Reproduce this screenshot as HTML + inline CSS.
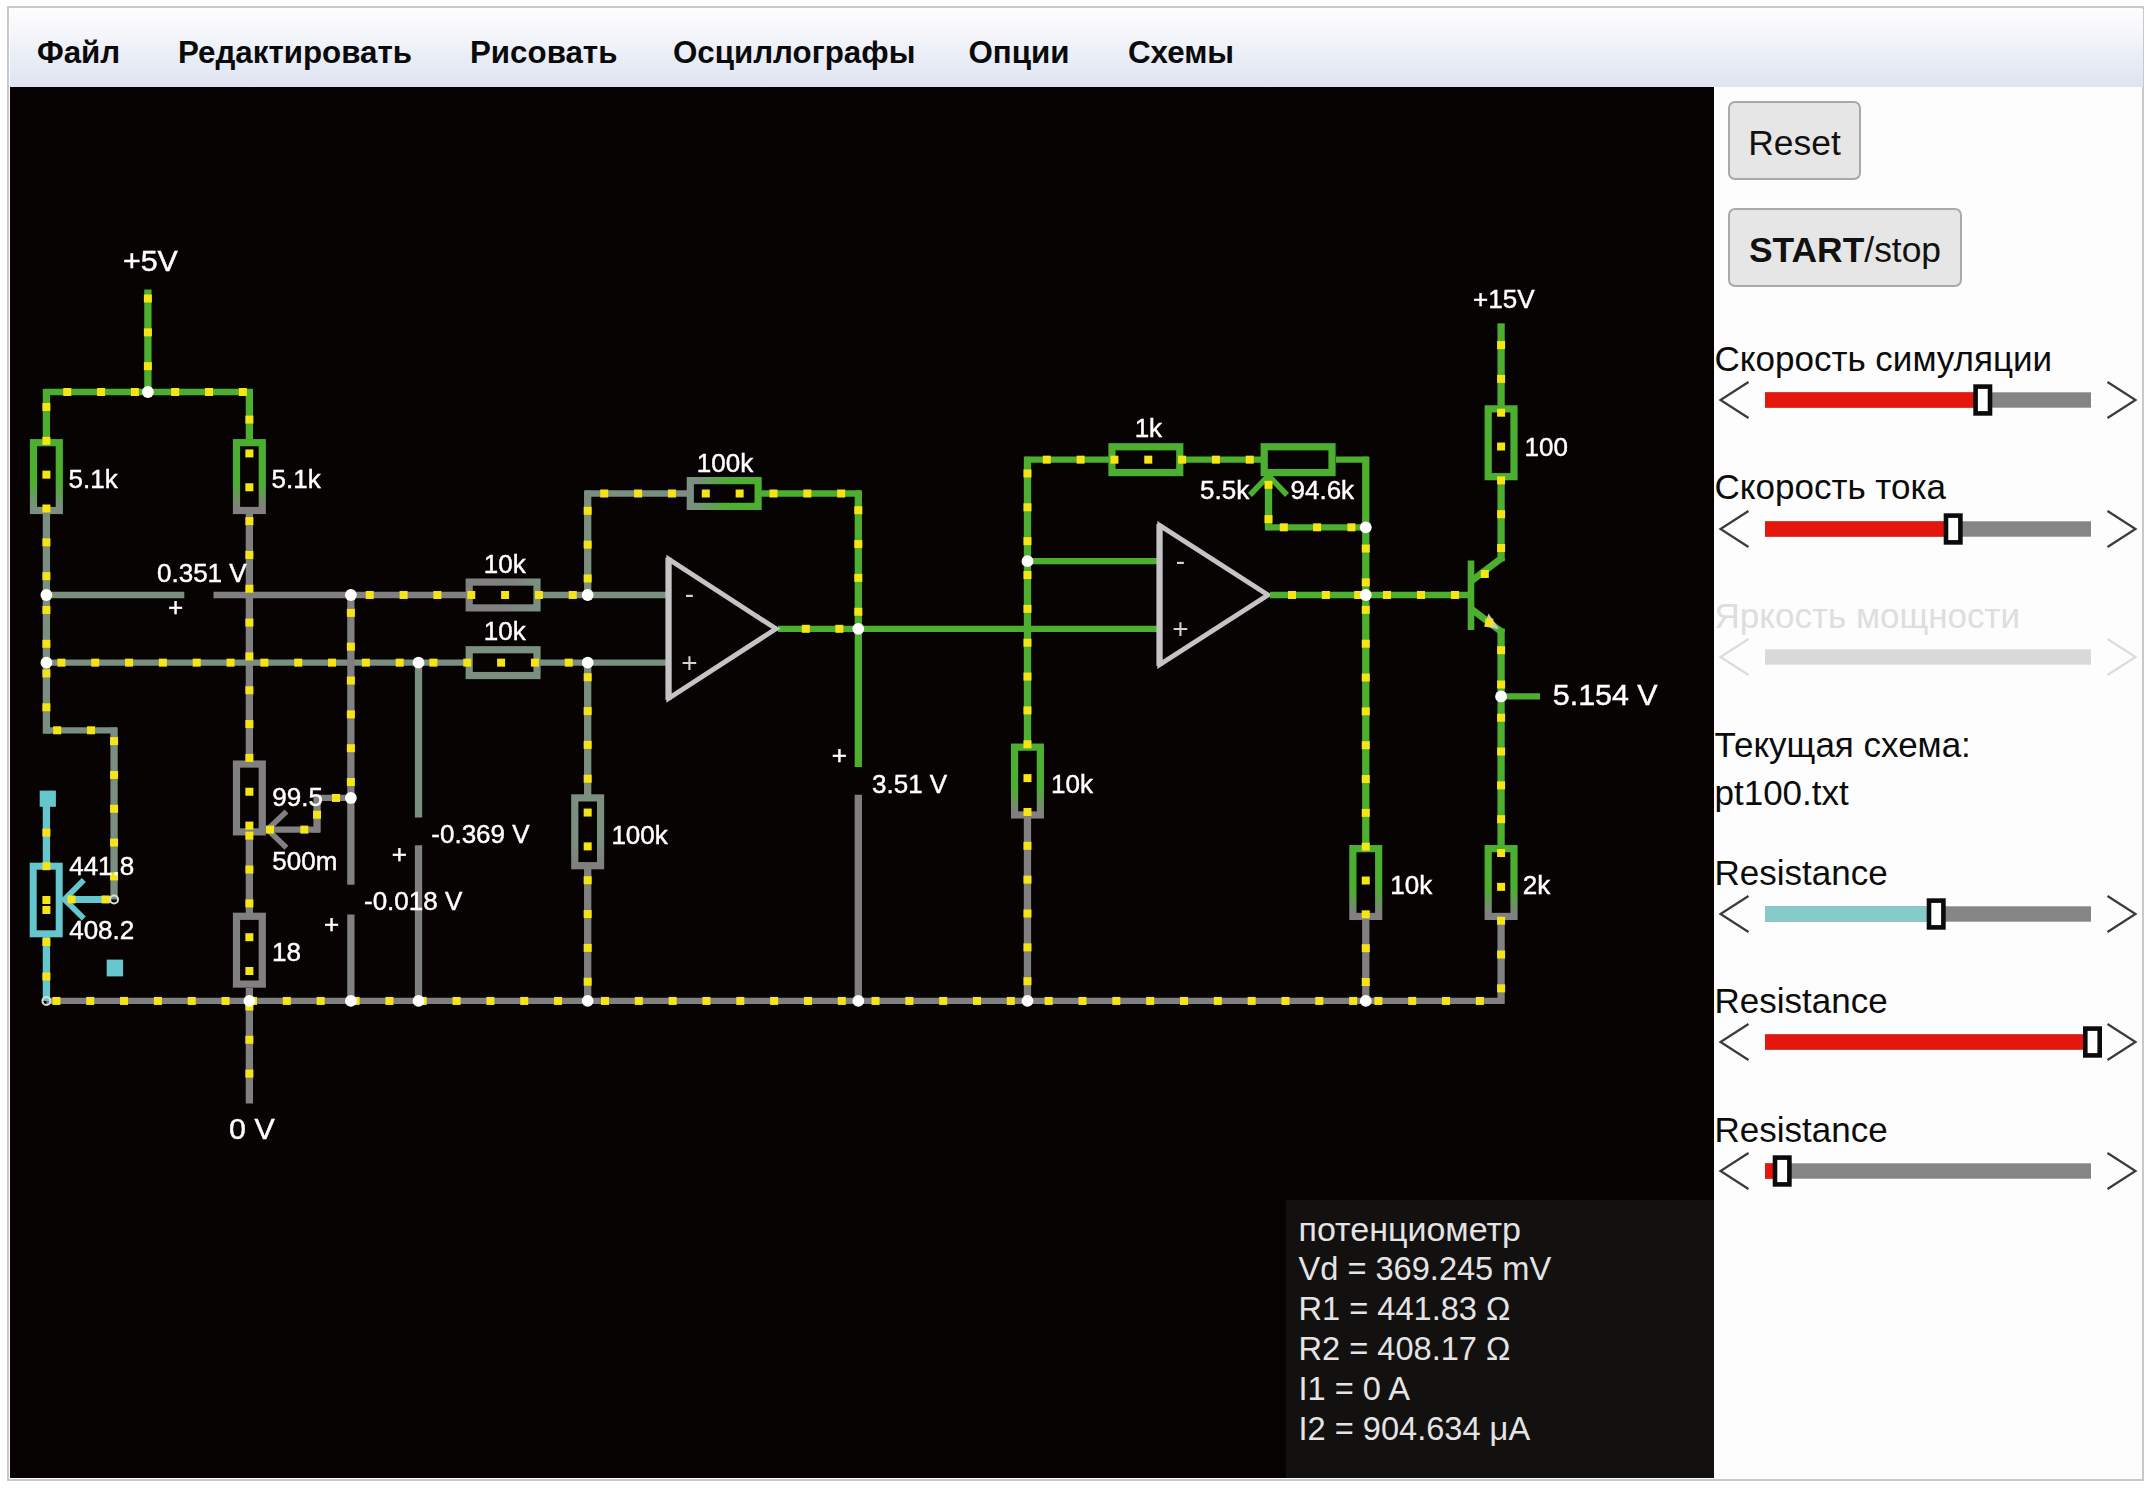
<!DOCTYPE html>
<html lang="ru"><head><meta charset="utf-8"><title>Circuit Simulator</title>
<style>
html,body{margin:0;padding:0;background:#fff;}
body{width:2154px;height:1489px;position:relative;overflow:hidden;font-family:"Liberation Sans",sans-serif;}
#frame{position:absolute;left:7px;top:6px;width:2133px;height:1471px;border:2.5px solid #c9c9c9;background:#fdfdfd;}
#menubar{position:absolute;left:9.5px;top:8.5px;width:2133px;height:78.5px;background:linear-gradient(#fdfdfe 0%,#f6f7fb 28%,#e9edf6 62%,#e0e4f0 100%);}
#menubar span{position:absolute;top:0;line-height:88px;font-weight:bold;font-size:31.3px;color:#0a0a0a;white-space:nowrap;}
#canvas{position:absolute;left:9.7px;top:87px;width:1704.3px;height:1391px;background:#070303;}
#cv{position:absolute;left:0;top:0;filter:blur(0.5px);}
#cv text{font-family:"Liberation Sans",sans-serif;}
#info{position:absolute;left:1286px;top:1200px;width:428px;height:278px;background:#131010;}
#info div{position:absolute;left:12.5px;font-size:32.6px;color:#e4e4e4;white-space:nowrap;line-height:40px;}
.btn{position:absolute;box-sizing:border-box;border:2px solid #a9a9a9;border-radius:7px;background:#e6e6e6;font-size:35.4px;color:#111;text-align:center;white-space:nowrap;}
.lbl{position:absolute;left:1714.5px;font-size:35px;color:#0c0c0c;white-space:nowrap;line-height:40px;}
.dis{color:#dedede;}
#side{position:absolute;left:0;top:0;}
</style></head><body>
<div id="frame"></div>
<div id="menubar">
<span style="left:27.5px">Файл</span><span style="left:168.5px">Редактировать</span><span style="left:460.5px">Рисовать</span><span style="left:663.5px">Осциллографы</span><span style="left:959px">Опции</span><span style="left:1118.5px">Схемы</span>
</div>
<div id="canvas"></div>
<div id="info">
<div style="top:9px;font-size:34px">потенциометр</div>
<div style="top:49px">Vd = 369.245 mV</div>
<div style="top:89px">R1 = 441.83 Ω</div>
<div style="top:129px">R2 = 408.17 Ω</div>
<div style="top:169px">I1 = 0 A</div>
<div style="top:209px">I2 = 904.634 μA</div>
</div>
<svg id="cv" width="2154" height="1489" viewBox="0 0 2154 1489">
<defs>
<linearGradient id="g1" gradientUnits="userSpaceOnUse" x1="46.4" y1="442.68" x2="46.4" y2="510.47"><stop offset="0.6" stop-color="#4caf30"/><stop offset="0.95" stop-color="#7a8f80"/></linearGradient>
<linearGradient id="g2" gradientUnits="userSpaceOnUse" x1="249.38" y1="442.68" x2="249.38" y2="510.47"><stop offset="0.6" stop-color="#4caf30"/><stop offset="0.95" stop-color="#808080"/></linearGradient>
<linearGradient id="g3" gradientUnits="userSpaceOnUse" x1="469.2" y1="594.98" x2="537" y2="594.98"><stop offset="0.6" stop-color="#808080"/><stop offset="0.95" stop-color="#7a8f80"/></linearGradient>
<linearGradient id="g4" gradientUnits="userSpaceOnUse" x1="690.3" y1="493.49" x2="758.1" y2="493.49"><stop offset="0.08" stop-color="#7a8f80"/><stop offset="0.55" stop-color="#4caf30"/></linearGradient>
<linearGradient id="g5" gradientUnits="userSpaceOnUse" x1="587.68" y1="797.89" x2="587.68" y2="865.69"><stop offset="0.6" stop-color="#7a8f80"/><stop offset="0.95" stop-color="#808080"/></linearGradient>
<linearGradient id="g6" gradientUnits="userSpaceOnUse" x1="1027.47" y1="747.14" x2="1027.47" y2="814.94"><stop offset="0.6" stop-color="#4caf30"/><stop offset="0.95" stop-color="#808080"/></linearGradient>
<linearGradient id="g7" gradientUnits="userSpaceOnUse" x1="1365.77" y1="848.63" x2="1365.77" y2="916.43"><stop offset="0.6" stop-color="#4caf30"/><stop offset="0.95" stop-color="#808080"/></linearGradient>
<linearGradient id="g8" gradientUnits="userSpaceOnUse" x1="1501.09" y1="848.63" x2="1501.09" y2="916.43"><stop offset="0.6" stop-color="#4caf30"/><stop offset="0.95" stop-color="#808080"/></linearGradient>
</defs>
<g>
<line x1="147.89" y1="289.51" x2="147.89" y2="392" stroke="#4caf30" stroke-width="7.3" stroke-linecap="butt"/>
<line x1="46.4" y1="439" x2="46.4" y2="389.1" stroke="#4caf30" stroke-width="7.3" stroke-linecap="butt"/>
<line x1="43.5" y1="392" x2="252.28" y2="392" stroke="#4caf30" stroke-width="6.3" stroke-linecap="butt"/>
<line x1="249.38" y1="389.1" x2="249.38" y2="439" stroke="#4caf30" stroke-width="7.3" stroke-linecap="butt"/>
<rect x="33.5" y="442.68" width="25.8" height="67.8" fill="none" stroke="url(#g1)" stroke-width="7.2"/>
<line x1="46.4" y1="514" x2="46.4" y2="733.7" stroke="#7a8f80" stroke-width="7.3" stroke-linecap="butt"/>
<line x1="46.4" y1="730.3" x2="116.96" y2="730.3" stroke="#7a8f80" stroke-width="6.3" stroke-linecap="butt"/>
<line x1="114.06" y1="727.4" x2="114.06" y2="899.45" stroke="#7a8f80" stroke-width="7.3" stroke-linecap="butt"/>
<rect x="236.48" y="442.68" width="25.8" height="67.8" fill="none" stroke="url(#g2)" stroke-width="7.2"/>
<line x1="249.38" y1="514" x2="249.38" y2="762" stroke="#808080" stroke-width="7.3" stroke-linecap="butt"/>
<rect x="236.48" y="764.06" width="25.8" height="67.8" fill="none" stroke="#808080" stroke-width="7.2"/>
<line x1="249.38" y1="835" x2="249.38" y2="914" stroke="#808080" stroke-width="7.3" stroke-linecap="butt"/>
<rect x="236.48" y="916.29" width="25.8" height="67.8" fill="none" stroke="#808080" stroke-width="7.2"/>
<line x1="249.38" y1="988" x2="249.38" y2="1103.43" stroke="#808080" stroke-width="7.3" stroke-linecap="butt"/>
<line x1="268" y1="829.6" x2="319.94" y2="829.6" stroke="#808080" stroke-width="6.3" stroke-linecap="butt"/>
<line x1="317.04" y1="832.5" x2="317.04" y2="795.06" stroke="#808080" stroke-width="7.3" stroke-linecap="butt"/>
<line x1="314.14" y1="797.96" x2="350.87" y2="797.96" stroke="#808080" stroke-width="6.3" stroke-linecap="butt"/>
<polyline points="286.5,811.5 267.5,829.6 286.5,847.7" fill="none" stroke="#808080" stroke-width="5.5" stroke-linejoin="miter" stroke-linecap="butt"/>
<line x1="46.4" y1="594.98" x2="184.3" y2="594.98" stroke="#7a8f80" stroke-width="6.3" stroke-linecap="butt"/>
<line x1="213.5" y1="594.98" x2="350.87" y2="594.98" stroke="#808080" stroke-width="6.3" stroke-linecap="butt"/>
<line x1="46.4" y1="662.64" x2="466" y2="662.64" stroke="#7a8f80" stroke-width="6.3" stroke-linecap="butt"/>
<rect x="469.2" y="649.74" width="67.8" height="25.8" fill="none" stroke="#7a8f80" stroke-width="7.2"/>
<line x1="540" y1="662.64" x2="666" y2="662.64" stroke="#7a8f80" stroke-width="6.3" stroke-linecap="butt"/>
<line x1="350.87" y1="594.98" x2="466" y2="594.98" stroke="#808080" stroke-width="6.3" stroke-linecap="butt"/>
<rect x="469.2" y="582.08" width="67.8" height="25.8" fill="none" stroke="url(#g3)" stroke-width="7.2"/>
<line x1="540" y1="594.98" x2="666" y2="594.98" stroke="#7a8f80" stroke-width="6.3" stroke-linecap="butt"/>
<line x1="350.87" y1="594.98" x2="350.87" y2="884.8" stroke="#808080" stroke-width="7.3" stroke-linecap="butt"/>
<line x1="350.87" y1="914.5" x2="350.87" y2="1000.94" stroke="#808080" stroke-width="7.3" stroke-linecap="butt"/>
<line x1="418.53" y1="662.64" x2="418.53" y2="817.5" stroke="#7a8f80" stroke-width="7.3" stroke-linecap="butt"/>
<line x1="418.53" y1="845.3" x2="418.53" y2="1000.94" stroke="#808080" stroke-width="7.3" stroke-linecap="butt"/>
<line x1="587.68" y1="594.98" x2="587.68" y2="490.59" stroke="#7a8f80" stroke-width="7.3" stroke-linecap="butt"/>
<line x1="584.78" y1="493.49" x2="687" y2="493.49" stroke="#7a8f80" stroke-width="6.3" stroke-linecap="butt"/>
<rect x="690.3" y="480.59" width="67.8" height="25.8" fill="none" stroke="url(#g4)" stroke-width="7.2"/>
<line x1="761" y1="493.49" x2="861.22" y2="493.49" stroke="#4caf30" stroke-width="6.3" stroke-linecap="butt"/>
<line x1="858.32" y1="490.59" x2="858.32" y2="628.81" stroke="#4caf30" stroke-width="7.3" stroke-linecap="butt"/>
<line x1="587.68" y1="662.64" x2="587.68" y2="795" stroke="#7a8f80" stroke-width="7.3" stroke-linecap="butt"/>
<rect x="574.78" y="797.89" width="25.8" height="67.8" fill="none" stroke="url(#g5)" stroke-width="7.2"/>
<line x1="587.68" y1="869" x2="587.68" y2="1000.94" stroke="#808080" stroke-width="7.3" stroke-linecap="butt"/>
<line x1="778" y1="628.81" x2="1158" y2="628.81" stroke="#4caf30" stroke-width="6.3" stroke-linecap="butt"/>
<polygon points="668.8,559.31 668.8,698.31 776,628.81" fill="none" stroke="#c4c4c4" stroke-width="4.9" stroke-linejoin="miter"/>
<line x1="668.5" y1="557.81" x2="668.5" y2="699.81" stroke="#c4c4c4" stroke-width="6.2"/>
<line x1="858.32" y1="628.81" x2="858.32" y2="767" stroke="#4caf30" stroke-width="7.3" stroke-linecap="butt"/>
<line x1="858.32" y1="794.7" x2="858.32" y2="1000.94" stroke="#808080" stroke-width="7.3" stroke-linecap="butt"/>
<line x1="1027.47" y1="744" x2="1027.47" y2="456.76" stroke="#4caf30" stroke-width="7.3" stroke-linecap="butt"/>
<line x1="1024.57" y1="459.66" x2="1110" y2="459.66" stroke="#4caf30" stroke-width="6.3" stroke-linecap="butt"/>
<line x1="1027.47" y1="561.15" x2="1158" y2="561.15" stroke="#4caf30" stroke-width="6.3" stroke-linecap="butt"/>
<rect x="1014.57" y="747.14" width="25.8" height="67.8" fill="none" stroke="url(#g6)" stroke-width="7.2"/>
<line x1="1027.47" y1="818" x2="1027.47" y2="1000.94" stroke="#808080" stroke-width="7.3" stroke-linecap="butt"/>
<rect x="1111.97" y="446.76" width="67.8" height="25.8" fill="none" stroke="#4caf30" stroke-width="7.2"/>
<line x1="1184" y1="459.66" x2="1262" y2="459.66" stroke="#4caf30" stroke-width="6.3" stroke-linecap="butt"/>
<rect x="1264.21" y="446.76" width="67.8" height="25.8" fill="none" stroke="#4caf30" stroke-width="7.2"/>
<line x1="1336" y1="459.66" x2="1368.67" y2="459.66" stroke="#4caf30" stroke-width="6.3" stroke-linecap="butt"/>
<line x1="1365.77" y1="456.76" x2="1365.77" y2="844" stroke="#4caf30" stroke-width="7.3" stroke-linecap="butt"/>
<line x1="1268.5" y1="476" x2="1268.5" y2="530.22" stroke="#4caf30" stroke-width="7.3" stroke-linecap="butt"/>
<line x1="1265.6" y1="527.32" x2="1365.77" y2="527.32" stroke="#4caf30" stroke-width="6.3" stroke-linecap="butt"/>
<polyline points="1250,495 1268.5,475.5 1287,495" fill="none" stroke="#4caf30" stroke-width="5.5" stroke-linejoin="miter" stroke-linecap="butt"/>
<polygon points="1159.8,525.48 1159.8,664.48 1268,594.98" fill="none" stroke="#c4c4c4" stroke-width="4.9" stroke-linejoin="miter"/>
<line x1="1159.5" y1="523.98" x2="1159.5" y2="665.98" stroke="#c4c4c4" stroke-width="6.2"/>
<line x1="1270" y1="594.98" x2="1468" y2="594.98" stroke="#4caf30" stroke-width="6.3" stroke-linecap="butt"/>
<rect x="1352.87" y="848.63" width="25.8" height="67.8" fill="none" stroke="url(#g7)" stroke-width="7.2"/>
<line x1="1365.77" y1="919" x2="1365.77" y2="1000.94" stroke="#808080" stroke-width="7.3" stroke-linecap="butt"/>
<line x1="1501.09" y1="323.34" x2="1501.09" y2="406" stroke="#4caf30" stroke-width="7.3" stroke-linecap="butt"/>
<rect x="1488.19" y="408.85" width="25.8" height="67.8" fill="none" stroke="#4caf30" stroke-width="7.2"/>
<line x1="1501.09" y1="480" x2="1501.09" y2="561.4" stroke="#4caf30" stroke-width="7.3" stroke-linecap="butt"/>
<line x1="1503.4" y1="556.75" x2="1472" y2="580.5" stroke="#4caf30" stroke-width="6.8" stroke-linecap="butt"/>
<line x1="1471" y1="560.5" x2="1471" y2="630" stroke="#4caf30" stroke-width="6.6" stroke-linecap="butt"/>
<line x1="1472" y1="609.5" x2="1503.4" y2="633.25" stroke="#4caf30" stroke-width="6.8" stroke-linecap="butt"/>
<line x1="1501.09" y1="628.6" x2="1501.09" y2="845" stroke="#4caf30" stroke-width="7.3" stroke-linecap="butt"/>
<polygon points="1499,629 1488.5,613.5 1484,626.5" fill="#c8c8c8"/>
<line x1="1501.09" y1="696.47" x2="1540" y2="696.47" stroke="#4caf30" stroke-width="6.3" stroke-linecap="butt"/>
<rect x="1488.19" y="848.63" width="25.8" height="67.8" fill="none" stroke="url(#g8)" stroke-width="7.2"/>
<line x1="1501.09" y1="919" x2="1501.09" y2="1003.84" stroke="#808080" stroke-width="7.3" stroke-linecap="butt"/>
<line x1="1503.99" y1="1000.94" x2="46.4" y2="1000.94" stroke="#808080" stroke-width="6.3" stroke-linecap="butt"/>
<rect x="39.7" y="790.6" width="16.2" height="16.2" fill="#66c6cd"/>
<rect x="106.7" y="959.6" width="16.4" height="16.8" fill="#66c6cd"/>
<line x1="46.4" y1="797.96" x2="46.4" y2="865" stroke="#66c6cd" stroke-width="7.3" stroke-linecap="butt"/>
<rect x="33.2" y="866.2" width="26" height="67.6" fill="none" stroke="#66c6cd" stroke-width="7"/>
<line x1="46.4" y1="936" x2="46.4" y2="1000.94" stroke="#66c6cd" stroke-width="7.3" stroke-linecap="butt"/>
<line x1="65" y1="899.45" x2="111.06" y2="899.45" stroke="#66c6cd" stroke-width="7" stroke-linecap="butt"/>
<polyline points="83.8,880 64.5,899.45 83.8,918.5" fill="none" stroke="#66c6cd" stroke-width="5.8" stroke-linejoin="miter" stroke-linecap="butt"/>
<rect x="143.89" y="294.51" width="8" height="8" fill="#f6e414"/>
<rect x="143.89" y="328.34" width="8" height="8" fill="#f6e414"/>
<rect x="143.89" y="362.17" width="8" height="8" fill="#f6e414"/>
<rect x="130.89" y="388" width="8" height="8" fill="#f6e414"/>
<rect x="97.06" y="388" width="8" height="8" fill="#f6e414"/>
<rect x="63.23" y="388" width="8" height="8" fill="#f6e414"/>
<rect x="171.19" y="388" width="8" height="8" fill="#f6e414"/>
<rect x="205.02" y="388" width="8" height="8" fill="#f6e414"/>
<rect x="238.85" y="388" width="8" height="8" fill="#f6e414"/>
<rect x="42.4" y="403" width="8" height="8" fill="#f6e414"/>
<rect x="42.4" y="436.83" width="8" height="8" fill="#f6e414"/>
<rect x="42.4" y="470.66" width="8" height="8" fill="#f6e414"/>
<rect x="42.4" y="504.49" width="8" height="8" fill="#f6e414"/>
<rect x="42.4" y="538.32" width="8" height="8" fill="#f6e414"/>
<rect x="42.4" y="572.15" width="8" height="8" fill="#f6e414"/>
<rect x="42.4" y="605.98" width="8" height="8" fill="#f6e414"/>
<rect x="42.4" y="639.81" width="8" height="8" fill="#f6e414"/>
<rect x="42.4" y="669.44" width="8" height="8" fill="#f6e414"/>
<rect x="42.4" y="703.27" width="8" height="8" fill="#f6e414"/>
<rect x="53.2" y="726.3" width="8" height="8" fill="#f6e414"/>
<rect x="87.03" y="726.3" width="8" height="8" fill="#f6e414"/>
<rect x="110.06" y="737.1" width="8" height="8" fill="#f6e414"/>
<rect x="110.06" y="770.93" width="8" height="8" fill="#f6e414"/>
<rect x="110.06" y="804.76" width="8" height="8" fill="#f6e414"/>
<rect x="110.06" y="838.59" width="8" height="8" fill="#f6e414"/>
<rect x="110.06" y="872.42" width="8" height="8" fill="#f6e414"/>
<rect x="245.38" y="415.6" width="8" height="8" fill="#f6e414"/>
<rect x="245.38" y="449.43" width="8" height="8" fill="#f6e414"/>
<rect x="245.38" y="483.26" width="8" height="8" fill="#f6e414"/>
<rect x="245.38" y="517.09" width="8" height="8" fill="#f6e414"/>
<rect x="245.38" y="550.92" width="8" height="8" fill="#f6e414"/>
<rect x="245.38" y="584.75" width="8" height="8" fill="#f6e414"/>
<rect x="245.38" y="618.58" width="8" height="8" fill="#f6e414"/>
<rect x="245.38" y="652.41" width="8" height="8" fill="#f6e414"/>
<rect x="245.38" y="686.24" width="8" height="8" fill="#f6e414"/>
<rect x="245.38" y="720.07" width="8" height="8" fill="#f6e414"/>
<rect x="245.38" y="753.9" width="8" height="8" fill="#f6e414"/>
<rect x="245.38" y="787.73" width="8" height="8" fill="#f6e414"/>
<rect x="245.38" y="821.6" width="8" height="8" fill="#f6e414"/>
<rect x="245.38" y="831.6" width="8" height="8" fill="#f6e414"/>
<rect x="245.38" y="865.5" width="8" height="8" fill="#f6e414"/>
<rect x="245.38" y="899.4" width="8" height="8" fill="#f6e414"/>
<rect x="245.38" y="933.2" width="8" height="8" fill="#f6e414"/>
<rect x="245.38" y="967" width="8" height="8" fill="#f6e414"/>
<rect x="245.38" y="1002.5" width="8" height="8" fill="#f6e414"/>
<rect x="245.38" y="1035.8" width="8" height="8" fill="#f6e414"/>
<rect x="245.38" y="1069.6" width="8" height="8" fill="#f6e414"/>
<rect x="266" y="825.6" width="8" height="8" fill="#f6e414"/>
<rect x="300.3" y="825.6" width="8" height="8" fill="#f6e414"/>
<rect x="313.04" y="810.7" width="8" height="8" fill="#f6e414"/>
<rect x="332" y="793.96" width="8" height="8" fill="#f6e414"/>
<rect x="57.4" y="658.64" width="8" height="8" fill="#f6e414"/>
<rect x="91.23" y="658.64" width="8" height="8" fill="#f6e414"/>
<rect x="125.06" y="658.64" width="8" height="8" fill="#f6e414"/>
<rect x="158.89" y="658.64" width="8" height="8" fill="#f6e414"/>
<rect x="192.72" y="658.64" width="8" height="8" fill="#f6e414"/>
<rect x="226.55" y="658.64" width="8" height="8" fill="#f6e414"/>
<rect x="260.38" y="658.64" width="8" height="8" fill="#f6e414"/>
<rect x="294.21" y="658.64" width="8" height="8" fill="#f6e414"/>
<rect x="328.04" y="658.64" width="8" height="8" fill="#f6e414"/>
<rect x="361.87" y="658.64" width="8" height="8" fill="#f6e414"/>
<rect x="395.7" y="658.64" width="8" height="8" fill="#f6e414"/>
<rect x="429.43" y="658.64" width="8" height="8" fill="#f6e414"/>
<rect x="463.26" y="658.64" width="8" height="8" fill="#f6e414"/>
<rect x="497.09" y="658.64" width="8" height="8" fill="#f6e414"/>
<rect x="530.92" y="658.64" width="8" height="8" fill="#f6e414"/>
<rect x="564.75" y="658.64" width="8" height="8" fill="#f6e414"/>
<rect x="365.77" y="590.98" width="8" height="8" fill="#f6e414"/>
<rect x="399.6" y="590.98" width="8" height="8" fill="#f6e414"/>
<rect x="433.43" y="590.98" width="8" height="8" fill="#f6e414"/>
<rect x="467.26" y="590.98" width="8" height="8" fill="#f6e414"/>
<rect x="501.09" y="590.98" width="8" height="8" fill="#f6e414"/>
<rect x="534.92" y="590.98" width="8" height="8" fill="#f6e414"/>
<rect x="568.75" y="590.98" width="8" height="8" fill="#f6e414"/>
<rect x="346.87" y="608.88" width="8" height="8" fill="#f6e414"/>
<rect x="346.87" y="642.71" width="8" height="8" fill="#f6e414"/>
<rect x="346.87" y="676.54" width="8" height="8" fill="#f6e414"/>
<rect x="346.87" y="710.37" width="8" height="8" fill="#f6e414"/>
<rect x="346.87" y="744.2" width="8" height="8" fill="#f6e414"/>
<rect x="346.87" y="778.03" width="8" height="8" fill="#f6e414"/>
<rect x="583.68" y="574.48" width="8" height="8" fill="#f6e414"/>
<rect x="583.68" y="540.63" width="8" height="8" fill="#f6e414"/>
<rect x="583.68" y="506.78" width="8" height="8" fill="#f6e414"/>
<rect x="600.24" y="489.49" width="8" height="8" fill="#f6e414"/>
<rect x="634.09" y="489.49" width="8" height="8" fill="#f6e414"/>
<rect x="667.94" y="489.49" width="8" height="8" fill="#f6e414"/>
<rect x="701.79" y="489.49" width="8" height="8" fill="#f6e414"/>
<rect x="735.64" y="489.49" width="8" height="8" fill="#f6e414"/>
<rect x="769.49" y="489.49" width="8" height="8" fill="#f6e414"/>
<rect x="803.34" y="489.49" width="8" height="8" fill="#f6e414"/>
<rect x="837.19" y="489.49" width="8" height="8" fill="#f6e414"/>
<rect x="854.32" y="506.21" width="8" height="8" fill="#f6e414"/>
<rect x="854.32" y="540.06" width="8" height="8" fill="#f6e414"/>
<rect x="854.32" y="573.91" width="8" height="8" fill="#f6e414"/>
<rect x="854.32" y="607.76" width="8" height="8" fill="#f6e414"/>
<rect x="583.68" y="673.24" width="8" height="8" fill="#f6e414"/>
<rect x="583.68" y="707.07" width="8" height="8" fill="#f6e414"/>
<rect x="583.68" y="740.9" width="8" height="8" fill="#f6e414"/>
<rect x="583.68" y="774.73" width="8" height="8" fill="#f6e414"/>
<rect x="583.68" y="808.56" width="8" height="8" fill="#f6e414"/>
<rect x="583.68" y="842.39" width="8" height="8" fill="#f6e414"/>
<rect x="583.68" y="876.22" width="8" height="8" fill="#f6e414"/>
<rect x="583.68" y="910.05" width="8" height="8" fill="#f6e414"/>
<rect x="583.68" y="943.88" width="8" height="8" fill="#f6e414"/>
<rect x="583.68" y="977.71" width="8" height="8" fill="#f6e414"/>
<rect x="801.8" y="624.81" width="8" height="8" fill="#f6e414"/>
<rect x="835.4" y="624.81" width="8" height="8" fill="#f6e414"/>
<rect x="1023.47" y="469.46" width="8" height="8" fill="#f6e414"/>
<rect x="1023.47" y="503.31" width="8" height="8" fill="#f6e414"/>
<rect x="1023.47" y="537.16" width="8" height="8" fill="#f6e414"/>
<rect x="1023.47" y="571.01" width="8" height="8" fill="#f6e414"/>
<rect x="1023.47" y="604.86" width="8" height="8" fill="#f6e414"/>
<rect x="1023.47" y="638.71" width="8" height="8" fill="#f6e414"/>
<rect x="1023.47" y="672.56" width="8" height="8" fill="#f6e414"/>
<rect x="1023.47" y="706.41" width="8" height="8" fill="#f6e414"/>
<rect x="1023.47" y="740.26" width="8" height="8" fill="#f6e414"/>
<rect x="1023.47" y="774.11" width="8" height="8" fill="#f6e414"/>
<rect x="1023.47" y="807.96" width="8" height="8" fill="#f6e414"/>
<rect x="1023.47" y="841.81" width="8" height="8" fill="#f6e414"/>
<rect x="1023.47" y="875.66" width="8" height="8" fill="#f6e414"/>
<rect x="1023.47" y="909.51" width="8" height="8" fill="#f6e414"/>
<rect x="1023.47" y="943.36" width="8" height="8" fill="#f6e414"/>
<rect x="1023.47" y="977.21" width="8" height="8" fill="#f6e414"/>
<rect x="1042.77" y="455.66" width="8" height="8" fill="#f6e414"/>
<rect x="1076.6" y="455.66" width="8" height="8" fill="#f6e414"/>
<rect x="1110.43" y="455.66" width="8" height="8" fill="#f6e414"/>
<rect x="1144.26" y="455.66" width="8" height="8" fill="#f6e414"/>
<rect x="1178.09" y="455.66" width="8" height="8" fill="#f6e414"/>
<rect x="1211.92" y="455.66" width="8" height="8" fill="#f6e414"/>
<rect x="1245.75" y="455.66" width="8" height="8" fill="#f6e414"/>
<rect x="1264.5" y="480.8" width="8" height="8" fill="#f6e414"/>
<rect x="1264.5" y="515.1" width="8" height="8" fill="#f6e414"/>
<rect x="1279.8" y="523.32" width="8" height="8" fill="#f6e414"/>
<rect x="1313.1" y="523.32" width="8" height="8" fill="#f6e414"/>
<rect x="1347.4" y="523.32" width="8" height="8" fill="#f6e414"/>
<rect x="1288" y="590.98" width="8" height="8" fill="#f6e414"/>
<rect x="1321.9" y="590.98" width="8" height="8" fill="#f6e414"/>
<rect x="1354.2" y="590.98" width="8" height="8" fill="#f6e414"/>
<rect x="1383" y="590.98" width="8" height="8" fill="#f6e414"/>
<rect x="1417" y="590.98" width="8" height="8" fill="#f6e414"/>
<rect x="1451" y="590.98" width="8" height="8" fill="#f6e414"/>
<rect x="1361.77" y="544.52" width="8" height="8" fill="#f6e414"/>
<rect x="1361.77" y="578.35" width="8" height="8" fill="#f6e414"/>
<rect x="1361.77" y="605.88" width="8" height="8" fill="#f6e414"/>
<rect x="1361.77" y="639.71" width="8" height="8" fill="#f6e414"/>
<rect x="1361.77" y="673.54" width="8" height="8" fill="#f6e414"/>
<rect x="1361.77" y="707.37" width="8" height="8" fill="#f6e414"/>
<rect x="1361.77" y="741.2" width="8" height="8" fill="#f6e414"/>
<rect x="1361.77" y="775.03" width="8" height="8" fill="#f6e414"/>
<rect x="1361.77" y="808.86" width="8" height="8" fill="#f6e414"/>
<rect x="1361.77" y="842.69" width="8" height="8" fill="#f6e414"/>
<rect x="1361.77" y="876.52" width="8" height="8" fill="#f6e414"/>
<rect x="1361.77" y="910.35" width="8" height="8" fill="#f6e414"/>
<rect x="1361.77" y="944.18" width="8" height="8" fill="#f6e414"/>
<rect x="1361.77" y="978.01" width="8" height="8" fill="#f6e414"/>
<rect x="1497.09" y="341.04" width="8" height="8" fill="#f6e414"/>
<rect x="1497.09" y="374.87" width="8" height="8" fill="#f6e414"/>
<rect x="1497.09" y="408.7" width="8" height="8" fill="#f6e414"/>
<rect x="1497.09" y="442.53" width="8" height="8" fill="#f6e414"/>
<rect x="1497.09" y="476.36" width="8" height="8" fill="#f6e414"/>
<rect x="1497.09" y="510.19" width="8" height="8" fill="#f6e414"/>
<rect x="1497.09" y="544.02" width="8" height="8" fill="#f6e414"/>
<rect x="1480.8" y="570" width="8" height="8" fill="#f6e414"/>
<rect x="1485.3" y="618.6" width="8" height="8" fill="#f6e414"/>
<rect x="1497.09" y="646.2" width="8" height="8" fill="#f6e414"/>
<rect x="1497.09" y="680.5" width="8" height="8" fill="#f6e414"/>
<rect x="1497.09" y="713.7" width="8" height="8" fill="#f6e414"/>
<rect x="1497.09" y="747.53" width="8" height="8" fill="#f6e414"/>
<rect x="1497.09" y="781.36" width="8" height="8" fill="#f6e414"/>
<rect x="1497.09" y="815.19" width="8" height="8" fill="#f6e414"/>
<rect x="1497.09" y="849.02" width="8" height="8" fill="#f6e414"/>
<rect x="1497.09" y="882.85" width="8" height="8" fill="#f6e414"/>
<rect x="1497.09" y="916.68" width="8" height="8" fill="#f6e414"/>
<rect x="1497.09" y="950.51" width="8" height="8" fill="#f6e414"/>
<rect x="1497.09" y="984.34" width="8" height="8" fill="#f6e414"/>
<rect x="52.4" y="996.94" width="8" height="8" fill="#f6e414"/>
<rect x="86.23" y="996.94" width="8" height="8" fill="#f6e414"/>
<rect x="120.06" y="996.94" width="8" height="8" fill="#f6e414"/>
<rect x="153.89" y="996.94" width="8" height="8" fill="#f6e414"/>
<rect x="187.72" y="996.94" width="8" height="8" fill="#f6e414"/>
<rect x="221.55" y="996.94" width="8" height="8" fill="#f6e414"/>
<rect x="248.98" y="996.94" width="8" height="8" fill="#f6e414"/>
<rect x="282.81" y="996.94" width="8" height="8" fill="#f6e414"/>
<rect x="316.64" y="996.94" width="8" height="8" fill="#f6e414"/>
<rect x="351.57" y="996.94" width="8" height="8" fill="#f6e414"/>
<rect x="385.4" y="996.94" width="8" height="8" fill="#f6e414"/>
<rect x="418.73" y="996.94" width="8" height="8" fill="#f6e414"/>
<rect x="452.56" y="996.94" width="8" height="8" fill="#f6e414"/>
<rect x="486.39" y="996.94" width="8" height="8" fill="#f6e414"/>
<rect x="520.22" y="996.94" width="8" height="8" fill="#f6e414"/>
<rect x="554.05" y="996.94" width="8" height="8" fill="#f6e414"/>
<rect x="600.98" y="996.94" width="8" height="8" fill="#f6e414"/>
<rect x="634.81" y="996.94" width="8" height="8" fill="#f6e414"/>
<rect x="668.64" y="996.94" width="8" height="8" fill="#f6e414"/>
<rect x="702.47" y="996.94" width="8" height="8" fill="#f6e414"/>
<rect x="736.3" y="996.94" width="8" height="8" fill="#f6e414"/>
<rect x="770.13" y="996.94" width="8" height="8" fill="#f6e414"/>
<rect x="803.96" y="996.94" width="8" height="8" fill="#f6e414"/>
<rect x="837.79" y="996.94" width="8" height="8" fill="#f6e414"/>
<rect x="871.52" y="996.94" width="8" height="8" fill="#f6e414"/>
<rect x="905.35" y="996.94" width="8" height="8" fill="#f6e414"/>
<rect x="939.18" y="996.94" width="8" height="8" fill="#f6e414"/>
<rect x="973.01" y="996.94" width="8" height="8" fill="#f6e414"/>
<rect x="1006.84" y="996.94" width="8" height="8" fill="#f6e414"/>
<rect x="1044.67" y="996.94" width="8" height="8" fill="#f6e414"/>
<rect x="1078.5" y="996.94" width="8" height="8" fill="#f6e414"/>
<rect x="1112.33" y="996.94" width="8" height="8" fill="#f6e414"/>
<rect x="1146.16" y="996.94" width="8" height="8" fill="#f6e414"/>
<rect x="1179.99" y="996.94" width="8" height="8" fill="#f6e414"/>
<rect x="1213.82" y="996.94" width="8" height="8" fill="#f6e414"/>
<rect x="1247.65" y="996.94" width="8" height="8" fill="#f6e414"/>
<rect x="1281.48" y="996.94" width="8" height="8" fill="#f6e414"/>
<rect x="1315.31" y="996.94" width="8" height="8" fill="#f6e414"/>
<rect x="1349.14" y="996.94" width="8" height="8" fill="#f6e414"/>
<rect x="1374.37" y="996.94" width="8" height="8" fill="#f6e414"/>
<rect x="1408.2" y="996.94" width="8" height="8" fill="#f6e414"/>
<rect x="1442.03" y="996.94" width="8" height="8" fill="#f6e414"/>
<rect x="1475.86" y="996.94" width="8" height="8" fill="#f6e414"/>
<rect x="42.4" y="828.6" width="8" height="8" fill="#f6e414"/>
<rect x="42.4" y="862.2" width="8" height="8" fill="#f6e414"/>
<rect x="42.4" y="896" width="8" height="8" fill="#f6e414"/>
<rect x="42.4" y="906" width="8" height="8" fill="#f6e414"/>
<rect x="42.4" y="938" width="8" height="8" fill="#f6e414"/>
<rect x="42.4" y="972.5" width="8" height="8" fill="#f6e414"/>
<rect x="67.5" y="895.45" width="8" height="8" fill="#f6e414"/>
<rect x="101.6" y="895.45" width="8" height="8" fill="#f6e414"/>
<circle cx="147.89" cy="392" r="5.9" fill="#fff"/>
<circle cx="46.4" cy="594.98" r="5.9" fill="#fff"/>
<circle cx="46.4" cy="662.64" r="5.9" fill="#fff"/>
<circle cx="249.38" cy="1000.94" r="5.9" fill="#fff"/>
<circle cx="350.87" cy="594.98" r="5.9" fill="#fff"/>
<circle cx="418.53" cy="662.64" r="5.9" fill="#fff"/>
<circle cx="587.68" cy="662.64" r="5.9" fill="#fff"/>
<circle cx="587.68" cy="594.98" r="5.9" fill="#fff"/>
<circle cx="350.87" cy="797.96" r="5.9" fill="#fff"/>
<circle cx="858.32" cy="628.81" r="5.9" fill="#fff"/>
<circle cx="1027.47" cy="561.15" r="5.9" fill="#fff"/>
<circle cx="1365.77" cy="527.32" r="5.9" fill="#fff"/>
<circle cx="1365.77" cy="594.98" r="5.9" fill="#fff"/>
<circle cx="1501.09" cy="696.47" r="5.9" fill="#fff"/>
<circle cx="350.87" cy="1000.94" r="5.9" fill="#fff"/>
<circle cx="418.53" cy="1000.94" r="5.9" fill="#fff"/>
<circle cx="587.68" cy="1000.94" r="5.9" fill="#fff"/>
<circle cx="858.32" cy="1000.94" r="5.9" fill="#fff"/>
<circle cx="1027.47" cy="1000.94" r="5.9" fill="#fff"/>
<circle cx="1365.77" cy="1000.94" r="5.9" fill="#fff"/>
<circle cx="46.4" cy="1000.94" r="4" fill="none" stroke="#ddd" stroke-width="2"/>
<circle cx="114.06" cy="899.45" r="4" fill="none" stroke="#ddd" stroke-width="2"/>
</g>
<g>
<text x="150.39" y="271.4" font-size="30.4" text-anchor="middle" fill="#fff" stroke="#fff" stroke-width="0.45">+5V</text>
<text x="68.5" y="488" font-size="26" text-anchor="start" fill="#fff" stroke="#fff" stroke-width="0.45">5.1k</text>
<text x="271.5" y="488" font-size="26" text-anchor="start" fill="#fff" stroke="#fff" stroke-width="0.45">5.1k</text>
<text x="272.3" y="806" font-size="26" text-anchor="start" fill="#fff" stroke="#fff" stroke-width="0.45">99.5</text>
<text x="272.3" y="870.4" font-size="26" text-anchor="start" fill="#fff" stroke="#fff" stroke-width="0.45">500m</text>
<text x="272" y="961" font-size="26" text-anchor="start" fill="#fff" stroke="#fff" stroke-width="0.45">18</text>
<text x="251.88" y="1138.5" font-size="30.4" text-anchor="middle" fill="#fff" stroke="#fff" stroke-width="0.45">0 V</text>
<text x="157" y="581.6" font-size="26" text-anchor="start" fill="#fff" stroke="#fff" stroke-width="0.45">0.351 V</text>
<text x="175.7" y="615.5" font-size="26" text-anchor="middle" fill="#fff" stroke="#fff" stroke-width="0.45">+</text>
<text x="504.8" y="640" font-size="26" text-anchor="middle" fill="#fff" stroke="#fff" stroke-width="0.45">10k</text>
<text x="504.8" y="573.2" font-size="26" text-anchor="middle" fill="#fff" stroke="#fff" stroke-width="0.45">10k</text>
<text x="364" y="910.3" font-size="26" text-anchor="start" fill="#fff" stroke="#fff" stroke-width="0.45">-0.018 V</text>
<text x="331.5" y="932.5" font-size="26" text-anchor="middle" fill="#fff" stroke="#fff" stroke-width="0.45">+</text>
<text x="431.3" y="843" font-size="26" text-anchor="start" fill="#fff" stroke="#fff" stroke-width="0.45">-0.369 V</text>
<text x="399.3" y="862.7" font-size="26" text-anchor="middle" fill="#fff" stroke="#fff" stroke-width="0.45">+</text>
<text x="725" y="471.5" font-size="26" text-anchor="middle" fill="#fff" stroke="#fff" stroke-width="0.45">100k</text>
<text x="611.4" y="843.5" font-size="26" text-anchor="start" fill="#fff" stroke="#fff" stroke-width="0.45">100k</text>
<text x="689.5" y="603.48" font-size="28" text-anchor="middle" fill="#d2d2d2">-</text>
<text x="689.5" y="672.14" font-size="28" text-anchor="middle" fill="#d2d2d2">+</text>
<text x="872" y="792.5" font-size="26" text-anchor="start" fill="#fff" stroke="#fff" stroke-width="0.45">3.51 V</text>
<text x="839.3" y="763.6" font-size="26" text-anchor="middle" fill="#fff" stroke="#fff" stroke-width="0.45">+</text>
<text x="1051" y="792.5" font-size="26" text-anchor="start" fill="#fff" stroke="#fff" stroke-width="0.45">10k</text>
<text x="1148.38" y="436.8" font-size="26" text-anchor="middle" fill="#fff" stroke="#fff" stroke-width="0.45">1k</text>
<text x="1200" y="499" font-size="26" text-anchor="start" fill="#fff" stroke="#fff" stroke-width="0.45">5.5k</text>
<text x="1290.5" y="499" font-size="26" text-anchor="start" fill="#fff" stroke="#fff" stroke-width="0.45">94.6k</text>
<text x="1180.5" y="569.65" font-size="28" text-anchor="middle" fill="#d2d2d2">-</text>
<text x="1180.5" y="638.31" font-size="28" text-anchor="middle" fill="#d2d2d2">+</text>
<text x="1390.3" y="894.3" font-size="26" text-anchor="start" fill="#fff" stroke="#fff" stroke-width="0.45">10k</text>
<text x="1503.8" y="308.4" font-size="26" text-anchor="middle" fill="#fff" stroke="#fff" stroke-width="0.45">+15V</text>
<text x="1524.5" y="455.5" font-size="26" text-anchor="start" fill="#fff" stroke="#fff" stroke-width="0.45">100</text>
<text x="1552.8" y="704.6" font-size="30.4" text-anchor="start" fill="#fff" stroke="#fff" stroke-width="0.45">5.154 V</text>
<text x="1522.8" y="894.3" font-size="26" text-anchor="start" fill="#fff" stroke="#fff" stroke-width="0.45">2k</text>
<text x="69.2" y="875" font-size="26" text-anchor="start" fill="#fff" stroke="#fff" stroke-width="0.45">441.8</text>
<text x="69.2" y="939.4" font-size="26" text-anchor="start" fill="#fff" stroke="#fff" stroke-width="0.45">408.2</text>
</g>
</svg>
<div class="btn" style="left:1728px;top:101px;width:133px;height:79px;line-height:80px;">Reset</div>
<div class="btn" style="left:1728px;top:208px;width:234px;height:79px;line-height:80px;"><b>START</b>/stop</div>
<div class="lbl " style="top:339.07px">Скорость симуляции</div>
<svg style="position:absolute;left:1714px;top:378px" width="430" height="44" viewBox="0 0 430 44"><polyline points="34.5,4 6.5,22 34.5,40" fill="none" stroke="#3a3a3a" stroke-width="2.2"/><polyline points="393.5,4 421.5,22 393.5,40" fill="none" stroke="#3a3a3a" stroke-width="2.2"/><rect x="51" y="14.3" width="326" height="15.4" fill="#858585"/><rect x="51" y="14.3" width="217.8" height="15.4" fill="#e3170d"/><rect x="261.6" y="8.6" width="14.4" height="26.8" fill="#fff" stroke="#0b0b0b" stroke-width="4.6"/></svg>
<div class="lbl " style="top:467.27px">Скорость тока</div>
<svg style="position:absolute;left:1714px;top:506.7px" width="430" height="44" viewBox="0 0 430 44"><polyline points="34.5,4 6.5,22 34.5,40" fill="none" stroke="#3a3a3a" stroke-width="2.2"/><polyline points="393.5,4 421.5,22 393.5,40" fill="none" stroke="#3a3a3a" stroke-width="2.2"/><rect x="51" y="14.3" width="326" height="15.4" fill="#858585"/><rect x="51" y="14.3" width="188.2" height="15.4" fill="#e3170d"/><rect x="232" y="8.6" width="14.4" height="26.8" fill="#fff" stroke="#0b0b0b" stroke-width="4.6"/></svg>
<div class="lbl dis" style="top:596.07px">Яркость мощности</div>
<svg style="position:absolute;left:1714px;top:635px" width="430" height="44" viewBox="0 0 430 44"><polyline points="34.5,4 6.5,22 34.5,40" fill="none" stroke="#dcdcdc" stroke-width="2.2"/><polyline points="393.5,4 421.5,22 393.5,40" fill="none" stroke="#dcdcdc" stroke-width="2.2"/><rect x="51" y="14.3" width="326" height="15.4" fill="#d9d9d9"/></svg>
<div class="lbl " style="top:724.57px">Текущая схема:</div>
<div class="lbl " style="top:772.57px">pt100.txt</div>
<div class="lbl " style="top:853.47px">Resistance</div>
<svg style="position:absolute;left:1714px;top:891.8px" width="430" height="44" viewBox="0 0 430 44"><polyline points="34.5,4 6.5,22 34.5,40" fill="none" stroke="#3a3a3a" stroke-width="2.2"/><polyline points="393.5,4 421.5,22 393.5,40" fill="none" stroke="#3a3a3a" stroke-width="2.2"/><rect x="51" y="14.3" width="326" height="15.4" fill="#858585"/><rect x="51" y="14.3" width="171.2" height="15.4" fill="#86cbca"/><rect x="215" y="8.6" width="14.4" height="26.8" fill="#fff" stroke="#0b0b0b" stroke-width="4.6"/></svg>
<div class="lbl " style="top:981.27px">Resistance</div>
<svg style="position:absolute;left:1714px;top:1020.1px" width="430" height="44" viewBox="0 0 430 44"><polyline points="34.5,4 6.5,22 34.5,40" fill="none" stroke="#3a3a3a" stroke-width="2.2"/><polyline points="393.5,4 421.5,22 393.5,40" fill="none" stroke="#3a3a3a" stroke-width="2.2"/><rect x="51" y="14.3" width="326" height="15.4" fill="#858585"/><rect x="51" y="14.3" width="327.5" height="15.4" fill="#e3170d"/><rect x="371.3" y="8.6" width="14.4" height="26.8" fill="#fff" stroke="#0b0b0b" stroke-width="4.6"/></svg>
<div class="lbl " style="top:1109.77px">Resistance</div>
<svg style="position:absolute;left:1714px;top:1148.7px" width="430" height="44" viewBox="0 0 430 44"><polyline points="34.5,4 6.5,22 34.5,40" fill="none" stroke="#3a3a3a" stroke-width="2.2"/><polyline points="393.5,4 421.5,22 393.5,40" fill="none" stroke="#3a3a3a" stroke-width="2.2"/><rect x="51" y="14.3" width="326" height="15.4" fill="#858585"/><rect x="51" y="14.3" width="17.2" height="15.4" fill="#e3170d"/><rect x="61" y="8.6" width="14.4" height="26.8" fill="#fff" stroke="#0b0b0b" stroke-width="4.6"/></svg>
</body></html>
